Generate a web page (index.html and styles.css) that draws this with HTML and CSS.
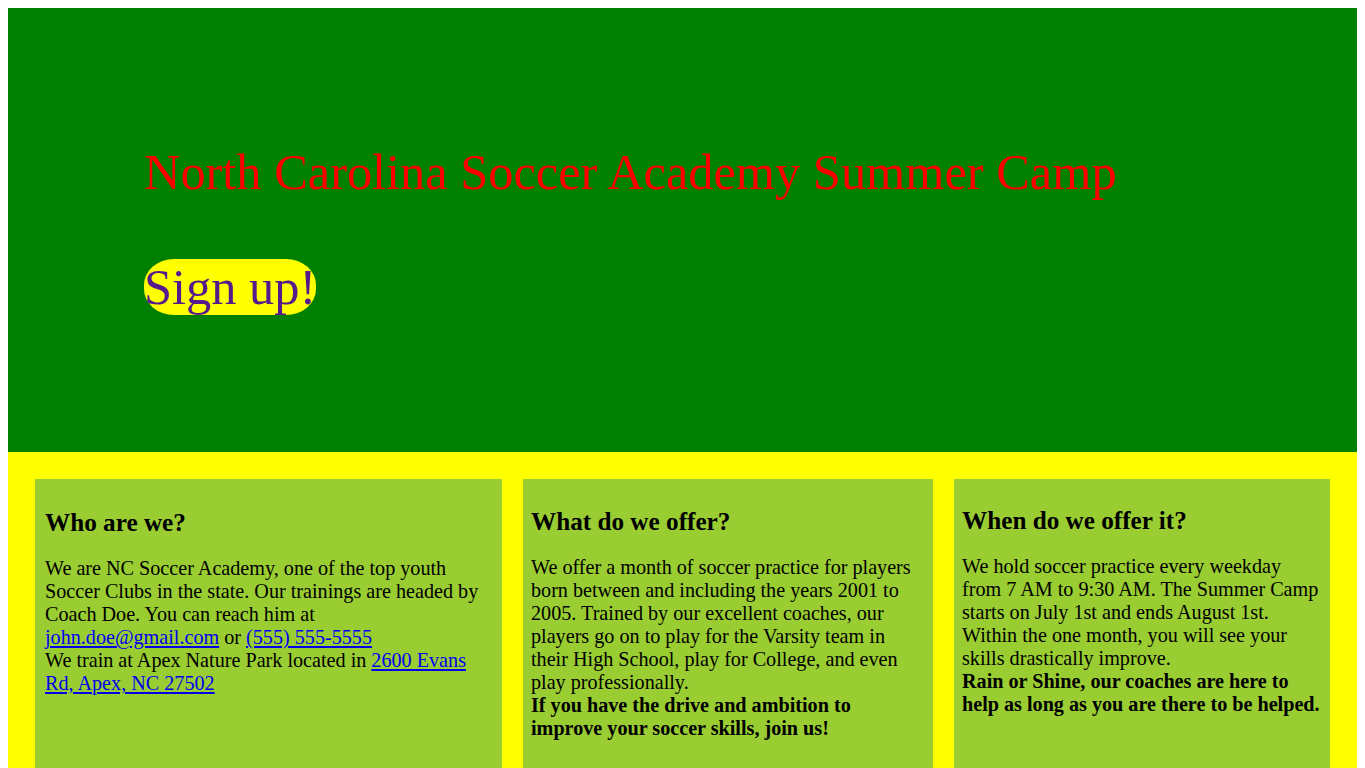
FILE: index.html
```html
<!DOCTYPE html>
<html lang="en">
<head>
<meta charset="utf-8">
<title>North Carolina Soccer Academy Summer Camp</title>
<link rel="stylesheet" href="styles.css">
</head>
<body>
<header class="hero">
  <h1 class="hero-title">North Carolina Soccer Academy Summer Camp</h1>
  <div class="hero-action"><a class="signup" href="#">Sign up!</a></div>
</header>
<section class="info">
  <article class="card card-who">
    <h2 class="card-title">Who are we?</h2>
    <p class="card-text">We are NC Soccer Academy, one of the top youth Soccer Clubs in the state. Our trainings are headed by Coach Doe. You can reach him at <a class="link" href="#">john.doe@gmail.com</a> or <a class="link" href="#">(555) 555-5555</a><br>We train at Apex Nature Park located in <a class="link" href="#">2600 Evans Rd, Apex, NC 27502</a></p>
  </article>
  <article class="card card-what">
    <h2 class="card-title">What do we offer?</h2>
    <p class="card-text">We offer a month of soccer practice for players born between and including the years 2001 to 2005. Trained by our excellent coaches, our players go on to play for the Varsity team in their High School, play for College, and even play professionally.<br><b>If you have the drive and ambition to improve your soccer skills, join us!</b></p>
  </article>
  <article class="card card-when">
    <h2 class="card-title">When do we offer it?</h2>
    <p class="card-text">We hold soccer practice every weekday from 7 AM to 9:30 AM. The Summer Camp starts on July 1st and ends August 1st. Within the one month, you will see your skills drastically improve.<br><b>Rain or Shine, our coaches are here to help as long as you are there to be helped.</b></p>
  </article>
</section>
</body>
</html>
```
FILE: styles.css
```css
body {
  margin: 8px;
  background: #ffffff;
  font-family: "Liberation Serif", "Times New Roman", serif;
  color: #000000;
}

.hero {
  background: #008000;
  padding: 136px;
}

.hero-title {
  margin: 0 0 58px 0;
  font-size: 50.4px;
  font-weight: normal;
  line-height: 57px;
  color: #ff0000;
}

.hero-action {
  font-size: 50.4px;
  line-height: 57px;
}

.signup {
  background: #ffff00;
  color: #551a8b;
  text-decoration: none;
  border-radius: 30px / 26px;
}

.info {
  background: #ffff00;
  padding: 27px;
  display: grid;
  grid-template-columns: 467fr 410fr 376fr;
  gap: 21px;
}

.card {
  background: #9acd32;
  min-height: 330px;
}

.card-who {
  padding: 9px 10px;
}

.card-what {
  padding: 8px;
}

.card-when {
  padding: 7px 8px;
}

.card-title {
  font-size: 25.2px;
  margin: 20px 0;
  line-height: 29px;
}

.card-text {
  font-size: 20.16px;
  line-height: 23px;
  margin: 20px 0;
}

.link {
  color: #0000ee;
  text-decoration: underline;
}
```
